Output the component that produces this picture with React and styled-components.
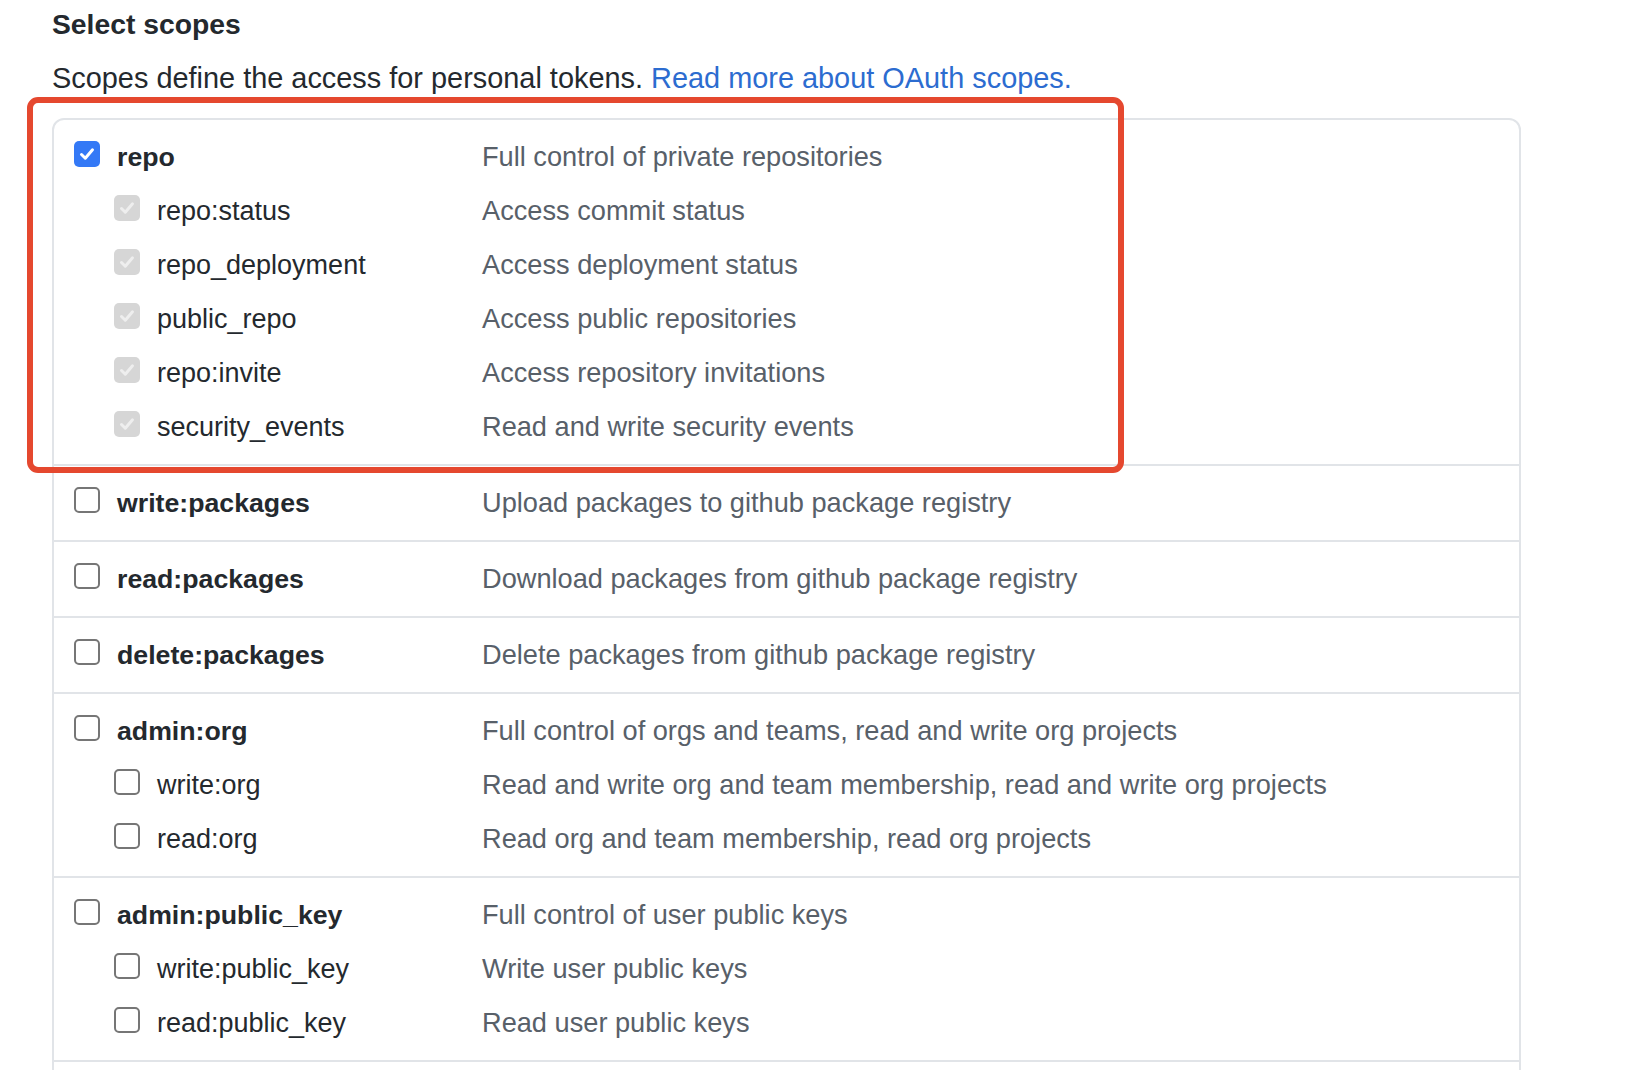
import React from "react";
import styled, { createGlobalStyle } from "styled-components";

const GlobalStyle = createGlobalStyle`
  html, body {
    margin: 0;
    padding: 0;
    background: #ffffff;
    overflow: hidden;
  }

  body {
    font-family: "Liberation Sans", Arial, sans-serif;
    color: #24292e;
  }
`;

const Page = styled.div`
  padding: 4px 0 0 52px;
  width: 1469px;
`;

const Heading = styled.h3`
  margin: 0;
  font-size: 28.3px;
  line-height: 40px;
  font-weight: 700;
  color: #24292e;
`;

const Intro = styled.p`
  margin: 14px 0 20px;
  font-size: 28.9px;
  line-height: 40px;
  color: #24292e;
`;

const Link = styled.a`
  color: #2c6cd0;
  text-decoration: none;
`;

const Section = styled.div`
  position: relative;
`;

const Card = styled.div`
  border: 2px solid #e1e4e8;
  border-radius: 12px;
`;

const Highlight = styled.div`
  position: absolute;
  left: -25px;
  top: -21px;
  width: 1097px;
  height: 376px;
  box-sizing: border-box;
  border: 6px solid #e5482f;
  border-radius: 11px;
  pointer-events: none;
`;

const Group = styled.div`
  padding: 10px 0;
  min-height: ${(p) => (p.$empty ? "80px" : "0")};

  & + & {
    border-top: 2px solid #e1e4e8;
  }
`;

const Row = styled.div`
  display: grid;
  grid-template-columns: 408px 1fr;
  align-items: center;
  height: 54px;
  padding-left: 20px;
`;

const Scope = styled.label`
  display: flex;
  align-items: center;
  gap: 17px;
  padding-left: ${(p) => (p.$sub ? "40px" : "0")};
  font-size: ${(p) => (p.$sub ? "27px" : "26.7px")};
  font-weight: ${(p) => (p.$sub ? 400 : 700)};
  color: #24292e;
  white-space: nowrap;
`;

const Box = styled.span`
  flex: none;
  width: 26px;
  height: 26px;
  box-sizing: border-box;
  margin-bottom: 7px;
  border-radius: 5px;
  display: flex;
  align-items: center;
  justify-content: center;
  border: ${(p) => (p.$checked ? "none" : "2px solid #767676")};
  background: ${(p) =>
    p.$checked ? (p.$disabled ? "#d6d6d6" : "#3479f6") : "#ffffff"};
`;

const Description = styled.span`
  font-size: 27.2px;
  color: #586069;
  white-space: nowrap;
`;

function Checkbox({ checked, disabled }) {
  return (
    <Box $checked={checked} $disabled={disabled}>
      {checked && (
        <svg width="18" height="18" viewBox="0 0 18 18" fill="none">
          <path
            d="M3.5 9.5 L7.3 13.2 L14.5 4.8"
            stroke={disabled ? "#eeeeee" : "#ffffff"}
            strokeWidth="3"
            strokeLinecap="round"
            strokeLinejoin="round"
          />
        </svg>
      )}
    </Box>
  );
}

const groups = [
  {
    name: "repo",
    text: "Full control of private repositories",
    checked: true,
    subs: [
      ["repo:status", "Access commit status"],
      ["repo_deployment", "Access deployment status"],
      ["public_repo", "Access public repositories"],
      ["repo:invite", "Access repository invitations"],
      ["security_events", "Read and write security events"],
    ],
  },
  { name: "write:packages", text: "Upload packages to github package registry", subs: [] },
  { name: "read:packages", text: "Download packages from github package registry", subs: [] },
  { name: "delete:packages", text: "Delete packages from github package registry", subs: [] },
  {
    name: "admin:org",
    text: "Full control of orgs and teams, read and write org projects",
    subs: [
      ["write:org", "Read and write org and team membership, read and write org projects"],
      ["read:org", "Read org and team membership, read org projects"],
    ],
  },
  {
    name: "admin:public_key",
    text: "Full control of user public keys",
    subs: [
      ["write:public_key", "Write user public keys"],
      ["read:public_key", "Read user public keys"],
    ],
  },
];

export default function App() {
  return (
    <>
      <GlobalStyle />
      <Page>
        <Heading>Select scopes</Heading>
        <Intro>
          Scopes define the access for personal tokens.{" "}
          <Link href="#">Read more about OAuth scopes.</Link>
        </Intro>
        <Section>
          <Card>
            {groups.map((g) => (
              <Group key={g.name}>
                <Row>
                  <Scope>
                    <Checkbox checked={g.checked} />
                    {g.name}
                  </Scope>
                  <Description>{g.text}</Description>
                </Row>
                {g.subs.map(([name, text]) => (
                  <Row key={name}>
                    <Scope $sub>
                      <Checkbox checked={g.checked} disabled={g.checked} />
                      {name}
                    </Scope>
                    <Description>{text}</Description>
                  </Row>
                ))}
              </Group>
            ))}
            <Group $empty />
          </Card>
          <Highlight />
        </Section>
      </Page>
    </>
  );
}
